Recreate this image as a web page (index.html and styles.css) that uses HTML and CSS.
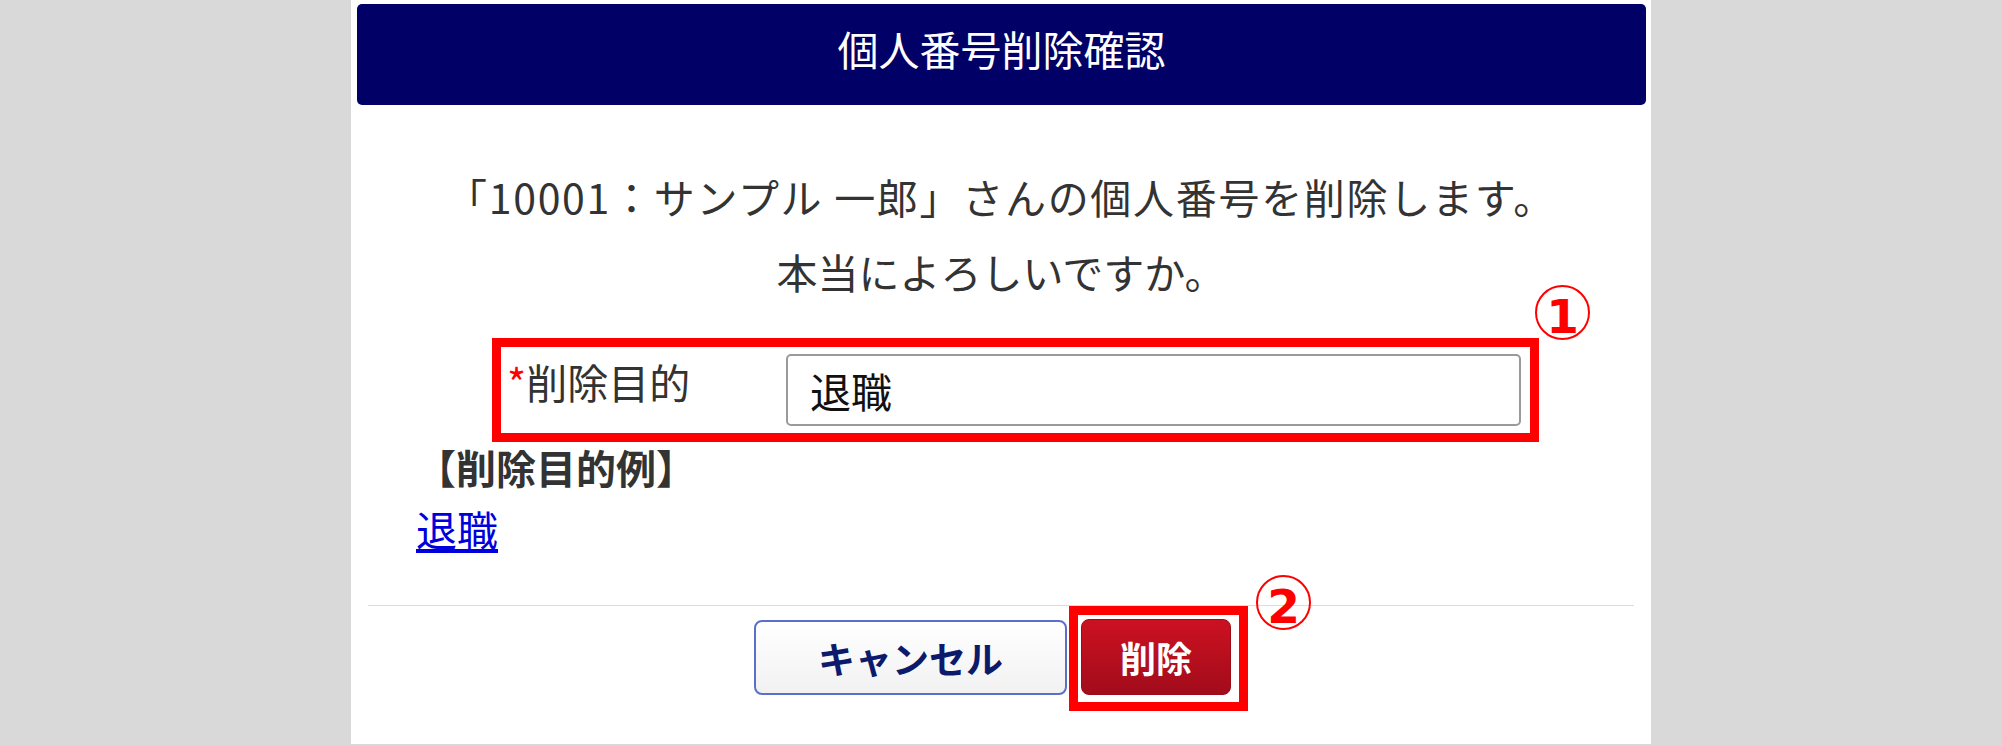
FILE: index.html
```html
<!DOCTYPE html>
<html lang="ja">
<head>
  <meta charset="UTF-8" />
  <meta name="viewport" content="width=device-width, initial-scale=1" />
  <title>個人番号削除確認</title>
  <link rel="stylesheet" href="styles.css">
</head>

<body>
  <div class="dialog">
    <div class="dialog-header">個人番号削除確認</div>

    <div class="dialog-body">
      <p class="message"><span class="message-target">「10001：サンプル 一郎」さんの個人番号を削除します。</span><br>本当によろしいですか。</p>

      <div class="callout callout-form">
        <div class="form-row">
          <label class="form-label" for="purpose"><span class="required">*</span>削除目的</label>
          <input id="purpose" class="form-input" type="text" value="退職" />
        </div>
        <span class="badge badge-form">1</span>
      </div>

      <div class="example-title">【削除目的例】</div>
      <a class="example-link" href="#">退職</a>
    </div>

    <div class="dialog-footer">
      <button class="btn btn-cancel">キャンセル</button>
      <div class="callout callout-button">
        <button class="btn btn-delete">削除</button>
        <span class="badge badge-button">2</span>
      </div>
    </div>
  </div>
</body>
</html>
```

FILE: styles.css
```css
* {
  box-sizing: border-box;
}

body {
  margin: 0;
  padding: 0;
  background: #d9d9d9;
  font-family: "Noto Sans CJK JP", sans-serif;
  color: #333;
}

.dialog {
  width: 1300px;
  height: 744px;
  margin: 0 auto;
  padding-top: 4px;
  background: #fff;
}

.dialog-header {
  display: flex;
  align-items: center;
  justify-content: center;
  height: 101px;
  margin: 0 5px 0 6px;
  padding-bottom: 14px;
  background: #000066;
  border-radius: 5px;
  color: #fff;
  font-size: 41px;
}

.dialog-body {
  padding: 0 65px;
}

.message {
  margin: 54px 0 0;
  text-align: center;
  font-size: 41px;
  line-height: 75px;
}

.message-target {
  letter-spacing: 1.7px;
}

/* red annotation frames */
.callout {
  position: relative;
  border: 9px solid #ff0000;
}

.callout-form {
  width: 1047px;
  margin: 29px 0 0 76px;
  padding: 7px 9px 7px 6px;
}

.form-row {
  display: flex;
  align-items: flex-start;
}

.form-label {
  flex: 0 0 279px;
  margin-top: -3px;
  font-size: 41px;
  line-height: 60px;
}

.required {
  color: #ff0000;
}

.form-input {
  flex: 1;
  height: 72px;
  padding: 0 22px;
  border: 2px solid #9a9a9a;
  border-radius: 5px;
  font-family: inherit;
  font-size: 41px;
  color: #111;
  outline: none;
}

.badge {
  position: absolute;
  display: flex;
  align-items: center;
  justify-content: center;
  width: 55px;
  height: 55px;
  padding-top: 8px;
  border: 2px solid #ff0000;
  border-radius: 50%;
  color: #ff0000;
  font-family: "DejaVu Sans", sans-serif;
  font-weight: bold;
  font-size: 47px;
  line-height: 1;
}

.badge-form {
  top: -62px;
  right: -60px;
}

.badge-button {
  top: -40px;
  right: -72px;
}

.example-title {
  font-size: 40px;
  font-weight: bold;
  line-height: 50px;
}

.example-link {
  display: block;
  width: max-content;
  color: #0000dd;
  font-size: 41px;
  line-height: 72px;
}

.dialog-footer {
  display: flex;
  align-items: flex-start;
  justify-content: center;
  margin: 41px 17px 0;
  border-top: 1px solid #dddddd;
}

.btn {
  border-radius: 8px;
  font-family: inherit;
  font-weight: bold;
  cursor: pointer;
}

.btn-cancel {
  width: 313px;
  height: 75px;
  margin-top: 14px;
  background: linear-gradient(#ffffff, #f1f1f1);
  border: 2px solid #5b6fc8;
  color: #0c1a6b;
  font-size: 37px;
}

.callout-button {
  margin-left: 2px;
  padding: 4px 8px 7px 3px;
}

.btn-delete {
  display: block;
  width: 150px;
  height: 76px;
  background: linear-gradient(#cc1121, #a20c1b);
  border: 1px solid #9c0b18;
  color: #fff;
  font-size: 36px;
}
```
